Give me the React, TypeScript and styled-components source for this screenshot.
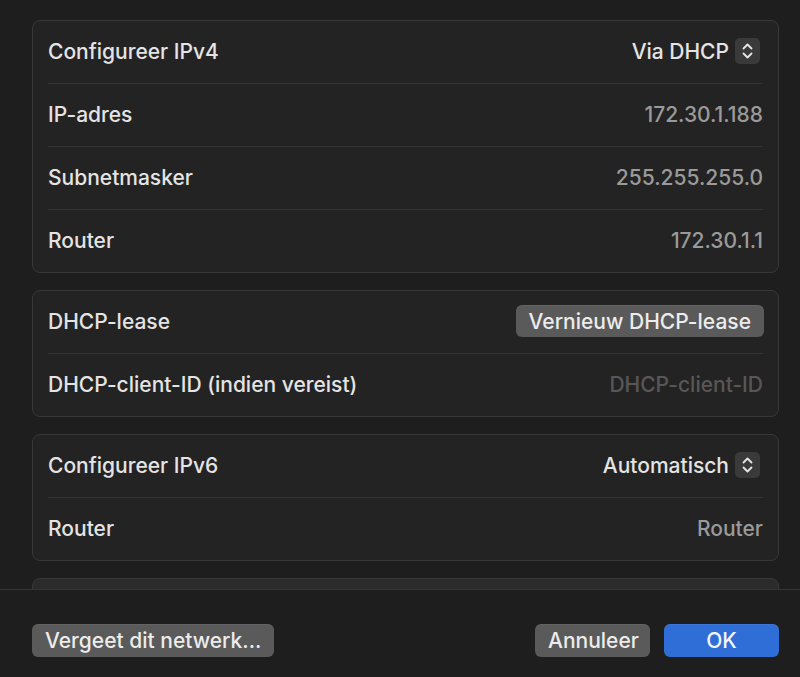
import React from "react";
import styled, { createGlobalStyle } from "styled-components";

const Global = createGlobalStyle`
  html, body { margin: 0; padding: 0; background: #1f1e1e; }
  body { font-family: Inter, "Noto Sans", "Liberation Sans", sans-serif; -webkit-font-smoothing: antialiased; }
  #root { height: 677px; }
`;

const Page = styled.div`
  width: 800px;
  height: 677px;
  display: flex;
  flex-direction: column;
  background: #1f1e1e;
  overflow: hidden;
`;

const Scroll = styled.div`
  height: 589px;
  flex-shrink: 0;
  overflow: hidden;
  padding: 20px 21px 0 32px;
  box-sizing: border-box;
  display: flex;
  flex-direction: column;
  gap: 17px;
`;

const Card = styled.div<{ $light?: boolean }>`
  background: ${(p) => (p.$light ? "#2c2b2b" : "#242323")};
  border: 1px solid #393838;
  border-radius: 8px;
  padding: 0 15px;
  flex-shrink: 0;
  ${(p) => (p.$light ? "height: 60px;" : "")}
`;

const Row = styled.div`
  height: 63px;
  box-sizing: border-box;
  padding-bottom: 2px;
  display: flex;
  align-items: center;
  justify-content: space-between;
  border-bottom: 1px solid #353434;
  &:last-child { border-bottom: none; height: 62px; }
`;

const Label = styled.span`
  color: #e4e4e4;
  font-size: 21px;
  font-weight: 450;
`;

const Value = styled.span<{ $tone?: "dim" | "placeholder" | "bright" }>`
  color: ${(p) =>
    p.$tone === "placeholder" ? "#585757" : p.$tone === "bright" ? "#e4e4e4" : "#9b9a9a"};
  font-size: 21px;
  font-weight: 450;
`;

const PopUp = styled.div`
  display: flex;
  align-items: center;
  gap: 6px;
  margin-right: 3px;
`;

const Stepper = styled.span`
  width: 25px;
  height: 26px;
  border-radius: 5px;
  background: #3b3a3a;
  display: flex;
  align-items: center;
  justify-content: center;
`;

const PillButton = styled.button<{ $primary?: boolean; $w?: number }>`
  height: 33px;
  border: none;
  border-radius: 6px;
  padding: 0 13px;
  font-family: inherit;
  font-size: 21px;
  font-weight: 450;
  color: ${(p) => (p.$primary ? "#f2f6ff" : "#ececec")};
  background: ${(p) => (p.$primary ? "#2f6ed6" : "#5b5a5a")};
  box-shadow: inset 0 1px 0 rgba(255,255,255,0.06);
  ${(p) => (p.$w ? `width: ${p.$w}px;` : "")}
  cursor: default;
`;

const SmallButton = styled(PillButton)`
  height: 32px;
  margin-right: -1px;
`;

const Footer = styled.div`
  flex: 1;
  border-top: 1px solid #363535;
  display: flex;
  align-items: flex-start;
  padding: 34px 21px 0 32px;
  box-sizing: border-box;
`;

const Spacer = styled.div`
  flex: 1;
`;

const FooterGroup = styled.div`
  display: flex;
  gap: 14px;
`;

const StepperIcon = () => (
  <svg width="13" height="18" viewBox="0 0 13 18" fill="none">
    <path d="M2.5 6.5 L6.5 2.5 L10.5 6.5" stroke="#e6e6e6" strokeWidth="1.8" strokeLinecap="round" strokeLinejoin="round" />
    <path d="M2.5 11.5 L6.5 15.5 L10.5 11.5" stroke="#e6e6e6" strokeWidth="1.8" strokeLinecap="round" strokeLinejoin="round" />
  </svg>
);

const Select = ({ value }: { value: string }) => (
  <PopUp>
    <Value $tone="bright">{value}</Value>
    <Stepper>
      <StepperIcon />
    </Stepper>
  </PopUp>
);

export default function App() {
  return (
    <>
      <Global />
      <Page>
        <Scroll>
          <Card>
            <Row>
              <Label>Configureer IPv4</Label>
              <Select value="Via DHCP" />
            </Row>
            <Row>
              <Label>IP-adres</Label>
              <Value>172.30.1.188</Value>
            </Row>
            <Row>
              <Label>Subnetmasker</Label>
              <Value>255.255.255.0</Value>
            </Row>
            <Row>
              <Label>Router</Label>
              <Value>172.30.1.1</Value>
            </Row>
          </Card>
          <Card>
            <Row>
              <Label>DHCP-lease</Label>
              <SmallButton>Vernieuw DHCP-lease</SmallButton>
            </Row>
            <Row>
              <Label>DHCP-client-ID (indien vereist)</Label>
              <Value $tone="placeholder">DHCP-client-ID</Value>
            </Row>
          </Card>
          <Card>
            <Row>
              <Label>Configureer IPv6</Label>
              <Select value="Automatisch" />
            </Row>
            <Row>
              <Label>Router</Label>
              <Value>Router</Value>
            </Row>
          </Card>
          <Card $light />
        </Scroll>
        <Footer>
          <PillButton>Vergeet dit netwerk...</PillButton>
          <Spacer />
          <FooterGroup>
            <PillButton $w={115}>Annuleer</PillButton>
            <PillButton $primary $w={115}>OK</PillButton>
          </FooterGroup>
        </Footer>
      </Page>
    </>
  );
}
